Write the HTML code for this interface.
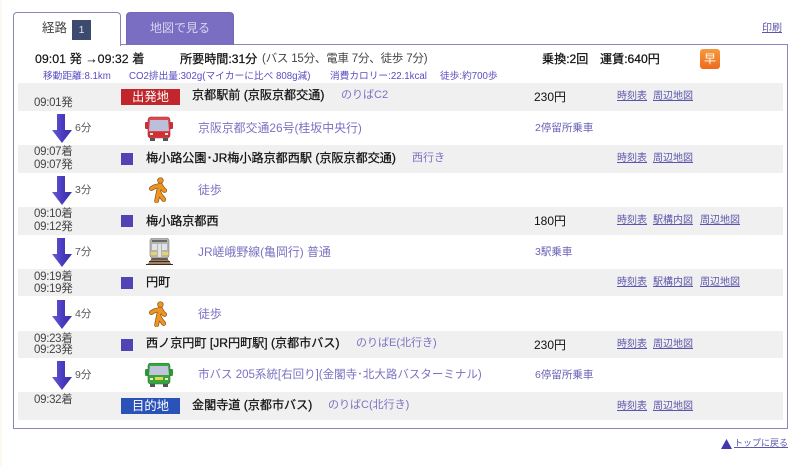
<!DOCTYPE html>
<html lang="ja"><head><meta charset="utf-8"><title>経路</title>
<style>
html,body{margin:0;padding:0;background:#fff}
#p{position:relative;width:800px;height:467px;overflow:hidden;background:#fff;font-family:"Liberation Sans","Noto Sans CJK JP",sans-serif;font-size:11.5px;color:#222;filter:blur(.3px)}
#p>*{position:absolute}
.t{white-space:nowrap;line-height:16px;height:16px}
.g{left:18px;width:765px;background:#f0f0f0}
.tm{left:34px;color:#444;font-size:11.5px;letter-spacing:-.3px}
.mn{left:75px;color:#555;font-size:10.5px}
.nm{color:#111;font-size:12.1px;-webkit-text-stroke:.25px #111}
.lk{color:#7a72c2;font-size:11px}
.sg{color:#7a72c2;font-size:11.9px}
.in{left:535px;color:#6a62b8;font-size:10.5px}
.a{color:#5b55ab;text-decoration:underline;font-size:10px}
.s{left:121px;width:12px;height:12px;background:#5243b5}
.sm{color:#5a4dc0;font-size:9.7px;top:69px}
.la{left:121px;width:59px;height:16px;line-height:17px;color:#fff;text-align:center;font-size:12.3px}
.ar{left:52px;width:20px;height:29px}
.ic{left:145px}
</style></head><body><div id="p">
<div style="left:0;top:0;width:2px;height:467px;background:#fdf8f2"></div>

<div style="left:13px;top:44px;width:773px;height:383px;border:1px solid #8d83bd"></div>
<div style="left:13px;top:12px;width:106px;height:33px;background:#fff;border:1px solid #8d83bd;border-bottom:0;border-radius:4px 4px 0 0"></div>
<div class="t" style="left:42px;top:20px;color:#444;font-size:12.5px">経路</div>
<div style="left:72px;top:20px;width:19px;height:20px;line-height:21px;background:#3c4a6e;color:#dfe3ee;font-size:10.5px;text-align:center">1</div>
<div style="left:126px;top:12px;width:106px;height:32px;background:#7a6ec2;border:1px solid #7266b8;border-bottom:0;border-radius:4px 4px 0 0"></div>
<div class="t" style="left:150px;top:20px;color:#d9d5f0;font-size:12px">地図で見る</div>
<div class="t a" style="left:762px;top:21px">印刷</div>

<div class="t" style="left:35px;top:51px;color:#111;font-size:12.4px;-webkit-text-stroke:.15px #111">09:01 発 →09:32 着</div>
<div class="t nm" style="left:180px;top:51px">所要時間:31分</div>
<div class="t" style="left:262px;top:51px;color:#444;font-size:11.5px;letter-spacing:-.2px">(バス 15分、電車 7分、徒歩 7分)</div>
<div class="t nm" style="left:542px;top:51px">乗換:2回</div>
<div class="t nm" style="left:600px;top:51px">運賃:640円</div>
<div style="left:700px;top:49px;width:20px;height:20px;border-radius:3px;background:linear-gradient(#f59a3c,#ee6a1c);color:#fff;font-size:12px;line-height:20px;text-align:center">早</div>

<div class="t sm" style="left:43px">移動距離:8.1km</div>
<div class="t sm" style="left:129px">CO2排出量:302g(マイカーに比べ 808g減)</div>
<div class="t sm" style="left:330px">消費カロリー:22.1kcal</div>
<div class="t sm" style="left:440px">徒歩:約700歩</div>

<div class="g" style="top:83px;height:28px"></div>
<div class="g" style="top:145px;height:28px"></div>
<div class="g" style="top:207px;height:28px"></div>
<div class="g" style="top:269px;height:27px"></div>
<div class="g" style="top:331px;height:27px"></div>
<div class="g" style="top:392px;height:28px"></div>

<div class="t tm" style="top:95px">09:01発</div>
<div class="t tm" style="top:144px">09:07着</div>
<div class="t tm" style="top:157px">09:07発</div>
<div class="t tm" style="top:206px">09:10着</div>
<div class="t tm" style="top:219px">09:12発</div>
<div class="t tm" style="top:269px">09:19着</div>
<div class="t tm" style="top:281px">09:19発</div>
<div class="t tm" style="top:331px">09:23着</div>
<div class="t tm" style="top:342px">09:23発</div>
<div class="t tm" style="top:392px">09:32着</div>

<svg width="0" height="0" style="left:0;top:0"><defs>
<linearGradient id="ag" x1="0" x2="1"><stop offset="0" stop-color="#6a5cd0"/><stop offset=".5" stop-color="#4a3cc0"/><stop offset="1" stop-color="#3a2eaa"/></linearGradient>
<symbol id="arr" viewBox="0 0 20 29"><path d="M5 0H13V16H20L10 29L0 16H5Z" fill="url(#ag)"/></symbol>
<symbol id="walk" viewBox="0 0 20 27">
<g fill="none" stroke-linecap="round" stroke-linejoin="round">
<g stroke="#7d5318" stroke-width="5">
<path d="M12 8L10 15M10.500 9L6 10L2.500 12M12.500 9L15 13L16.500 14M10 15L12 19L15.500 23.500M10 15L9 20L8 25"/></g>
<g stroke="#ef9423" stroke-width="3.600">
<path d="M12 8L10 15M10.500 9L6 10L2.500 12M12.500 9L15 13L16.500 14M10 15L12 19L15.500 23.500M10 15L9 20L8 25"/></g>
</g>
<circle cx="12" cy="3.500" r="3" fill="#ef9423" stroke="#7d5318" stroke-width=".7"/>
</symbol>
</defs></svg>
<svg class="ar" style="top:114px" viewBox="0 0 20 29"><use href="#arr"/></svg>
<svg class="ar" style="top:176px" viewBox="0 0 20 29"><use href="#arr"/></svg>
<svg class="ar" style="top:238px" viewBox="0 0 20 29"><use href="#arr"/></svg>
<svg class="ar" style="top:300px" viewBox="0 0 20 29"><use href="#arr"/></svg>
<svg class="ar" style="top:361px" viewBox="0 0 20 29"><use href="#arr"/></svg>

<div class="t mn" style="top:120px">6分</div>
<div class="t mn" style="top:182px">3分</div>
<div class="t mn" style="top:244px">7分</div>
<div class="t mn" style="top:306px">4分</div>
<div class="t mn" style="top:367px">9分</div>

<div class="la" style="top:89px;background:#c0262c">出発地</div>
<div class="s" style="top:153px"></div>
<div class="s" style="top:215px"></div>
<div class="s" style="top:277px"></div>
<div class="s" style="top:339px"></div>
<div class="la" style="top:398px;background:#2a52b8">目的地</div>

<div class="t nm" style="left:192px;top:87px">京都駅前 (京阪京都交通)</div>
<div class="t lk" style="left:341px;top:87px">のりばC2</div>
<div class="t nm" style="left:146px;top:150px">梅小路公園･JR梅小路京都西駅 (京阪京都交通)</div>
<div class="t lk" style="left:412px;top:150px">西行き</div>
<div class="t nm" style="left:146px;top:213px">梅小路京都西</div>
<div class="t nm" style="left:146px;top:274px">円町</div>
<div class="t nm" style="left:146px;top:335px">西ノ京円町 [JR円町駅] (京都市バス)</div>
<div class="t lk" style="left:356px;top:335px">のりばE(北行き)</div>
<div class="t nm" style="left:192px;top:397px">金閣寺道 (京都市バス)</div>
<div class="t lk" style="left:328px;top:397px">のりばC(北行き)</div>

<div class="t" style="left:534px;top:89px;color:#111;font-size:12px">230円</div>
<div class="t" style="left:534px;top:213px;color:#111;font-size:12px">180円</div>
<div class="t" style="left:534px;top:337px;color:#111;font-size:12px">230円</div>

<div class="t a" style="left:617px;top:89px">時刻表</div><div class="t a" style="left:653px;top:89px">周辺地図</div>
<div class="t a" style="left:617px;top:151px">時刻表</div><div class="t a" style="left:653px;top:151px">周辺地図</div>
<div class="t a" style="left:617px;top:213px">時刻表</div><div class="t a" style="left:653px;top:213px">駅構内図</div><div class="t a" style="left:700px;top:213px">周辺地図</div>
<div class="t a" style="left:617px;top:275px">時刻表</div><div class="t a" style="left:653px;top:275px">駅構内図</div><div class="t a" style="left:700px;top:275px">周辺地図</div>
<div class="t a" style="left:617px;top:337px">時刻表</div><div class="t a" style="left:653px;top:337px">周辺地図</div>
<div class="t a" style="left:617px;top:399px">時刻表</div><div class="t a" style="left:653px;top:399px">周辺地図</div>

<svg class="ic" style="top:116px" width="28" height="25" viewBox="0 0 28 25">
<rect x="0" y="6" width="4" height="7" rx="1" fill="#c9303a"/><rect x="24" y="6" width="4" height="7" rx="1" fill="#c9303a"/>
<rect x="3" y="1" width="22" height="21" rx="3" fill="#e2454e" stroke="#9a2a30" stroke-width=".6"/>
<path d="M5 4H23L24 15H4Z" fill="#bcbfda"/>
<rect x="3.500" y="16" width="21" height="5" fill="#cc3038"/>
<rect x="5" y="22" width="5" height="3" fill="#555"/><rect x="18" y="22" width="5" height="3" fill="#555"/>
<rect x="5" y="17" width="3" height="2" fill="#f5e9c0"/><rect x="20" y="17" width="3" height="2" fill="#f5e9c0"/>
</svg>
<svg class="ic" style="top:177px;left:149px" width="19" height="26" viewBox="0 0 20 27"><use href="#walk"/></svg>
<svg class="ic" style="top:238px;left:146px" width="27" height="28" viewBox="0 0 27 28">
<path d="M1 27L6 20H21L26 27Z" fill="#9c8468"/><path d="M0 26.500H27M3 23.500H24M5 21H22" stroke="#3c2c20" stroke-width="1"/>
<rect x="4" y="0" width="19" height="20" rx="3" fill="#b5b5af" stroke="#808080" stroke-width=".6"/>
<rect x="6" y="2" width="15" height="2" fill="#6a6a6a"/>
<rect x="6" y="6" width="5" height="6" fill="#e2e2ee"/><rect x="16" y="6" width="5" height="6" fill="#e2e2ee"/><rect x="12" y="6" width="3" height="13" fill="#e4e4e4"/>
<rect x="4.500" y="14" width="6.500" height="3" fill="#e6d36a"/><rect x="16" y="14" width="6.500" height="3" fill="#e6d36a"/>
</svg>
<svg class="ic" style="top:301px;left:149px" width="19" height="26" viewBox="0 0 20 27"><use href="#walk"/></svg>
<svg class="ic" style="top:363px" width="28" height="24" viewBox="0 0 28 24">
<rect x="0" y="6" width="4" height="7" rx="1" fill="#2f9a3a"/><rect x="24" y="6" width="4" height="7" rx="1" fill="#2f9a3a"/>
<rect x="3" y="0" width="22" height="21" rx="3" fill="#38a541" stroke="#2c6a30" stroke-width=".6"/>
<path d="M5 3H23L24 12H4Z" fill="#bfc5da"/>
<rect x="10" y="14" width="8" height="3" fill="#e7d44a"/>
<rect x="5" y="21" width="5" height="3" fill="#555"/><rect x="18" y="21" width="5" height="3" fill="#555"/>
<rect x="5" y="15" width="3" height="2" fill="#f5f0c0"/><rect x="20" y="15" width="3" height="2" fill="#f5f0c0"/>
</svg>

<div class="t sg" style="left:198px;top:120px">京阪京都交通26号(桂坂中央行)</div>
<div class="t sg" style="left:198px;top:182px">徒歩</div>
<div class="t sg" style="left:198px;top:244px">JR嵯峨野線(亀岡行) 普通</div>
<div class="t sg" style="left:198px;top:306px">徒歩</div>
<div class="t sg" style="left:198px;top:367px;font-size:11.5px">市バス 205系統[右回り](金閣寺･北大路バスターミナル)</div>
<div class="t in" style="top:120px">2停留所乗車</div>
<div class="t in" style="top:244px">3駅乗車</div>
<div class="t in" style="top:367px">6停留所乗車</div>

<svg style="left:721px;top:439px" width="11" height="10" viewBox="0 0 11 10"><path d="M5.500 0L11 10H0Z" fill="#4338b0"/></svg>
<div class="t a" style="left:734px;top:435px;font-size:9px">トップに戻る</div>
</div></body></html>
